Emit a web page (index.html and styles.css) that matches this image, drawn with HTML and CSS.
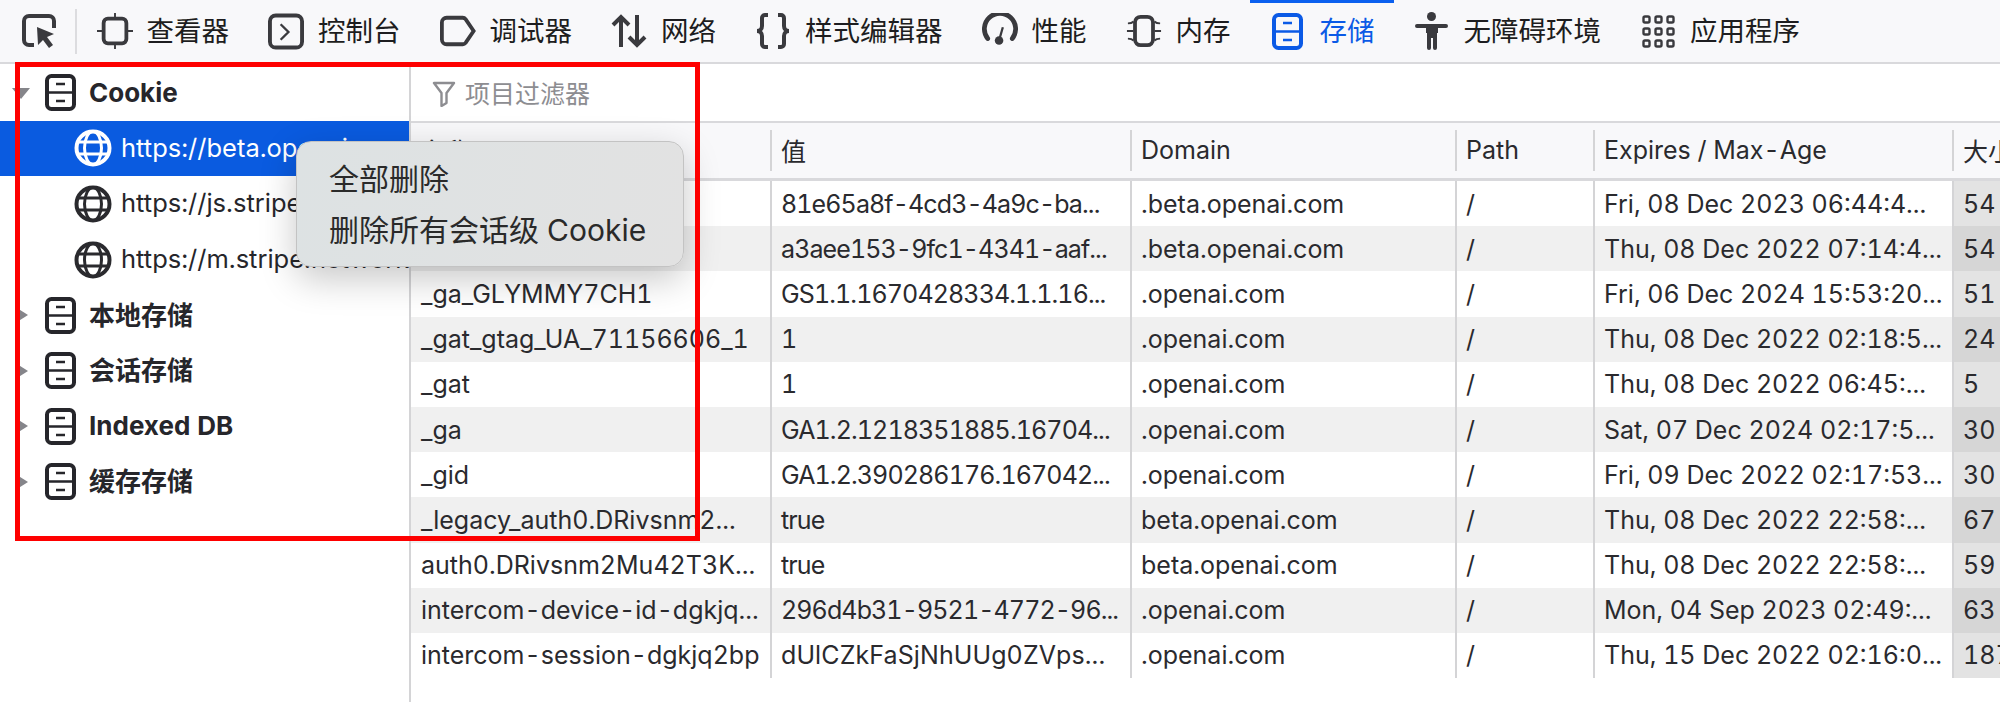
FILE: index.html
```html
<!DOCTYPE html>
<html lang="zh-CN">
<head>
<meta charset="utf-8">
<title>存储</title>
<link rel="stylesheet" href="styles.css">
</head>
<body>
<svg class="defs" width="0" height="0" aria-hidden="true">
  <symbol id="cabinet" viewBox="0 0 31 37">
    <rect x="2" y="2" width="27" height="33" rx="4.5" fill="none" stroke="currentColor" stroke-width="4"/>
    <path d="M3 18.5h25M11 10h9M11 27h9" fill="none" stroke="currentColor" stroke-width="2.6"/>
  </symbol>
  <symbol id="globe" viewBox="0 0 38 38">
    <g fill="none" stroke="currentColor">
      <circle cx="19" cy="19" r="16.5" stroke-width="4"/>
      <ellipse cx="19" cy="19" rx="8.5" ry="16.5" stroke-width="3"/>
      <path d="M4 13h30M4 25h30" stroke-width="3"/>
    </g>
  </symbol>
</svg>
<header class="toolbar">
  <button class="pick" aria-label="pick">
    <svg width="34" height="34" viewBox="0 0 34 34"><path d="M12 31H7a5 5 0 0 1-5-5V7a5 5 0 0 1 5-5h20a5 5 0 0 1 5 5v7" fill="none" stroke="currentColor" stroke-width="4"/><path d="M15 13l17 7-7 3 6 8-4 3-6-8-5 5z" fill="currentColor"/></svg>
  </button>
  <span class="tool-sep"></span>
  <nav class="tabs">
    <a class="tab"><span class="ti"><svg width="38" height="38" viewBox="0 0 38 38"><rect x="7" y="6" width="24" height="26" rx="4.5" fill="none" stroke="currentColor" stroke-width="4"/><path d="M19 0v6M19 32v6M0 19h7M31 19h7" stroke="currentColor" stroke-width="2" fill="none"/></svg></span><span class="tl">查看器</span></a>
    <a class="tab"><span class="ti"><svg width="37" height="37" viewBox="0 0 37 37"><rect x="2" y="2" width="33" height="33" rx="6" fill="none" stroke="currentColor" stroke-width="4"/><path d="M13 11l8 8-8 8" fill="none" stroke="currentColor" stroke-width="2.4"/></svg></span><span class="tl">控制台</span></a>
    <a class="tab"><span class="ti"><svg width="38" height="32" viewBox="0 0 38 32"><path d="M7 2h17a4 4 0 0 1 3 1.500L35.500 16 27 28.500a4 4 0 0 1-3 1.500H7a5 5 0 0 1-5-5V7a5 5 0 0 1 5-5z" fill="none" stroke="currentColor" stroke-width="4"/></svg></span><span class="tl">调试器</span></a>
    <a class="tab"><span class="ti"><svg width="36" height="34" viewBox="0 0 36 34"><path d="M10 33V4M2 11l8-8 8 8M26 1v29M18 23l8 8 8-8" fill="none" stroke="currentColor" stroke-width="4"/></svg></span><span class="tl">网络</span></a>
    <a class="tab"><span class="ti"><svg width="36" height="36" viewBox="0 0 36 36"><path d="M13 2H10a3 3 0 0 0-3 3v8c0 3-2 5-5 5 3 0 5 2 5 5v8a3 3 0 0 0 3 3h3M23 2h3a3 3 0 0 1 3 3v8c0 3 2 5 5 5-3 0-5 2-5 5v8a3 3 0 0 1-3 3h-3" fill="none" stroke="currentColor" stroke-width="4"/></svg></span><span class="tl">样式编辑器</span></a>
    <a class="tab"><span class="ti"><svg width="38" height="36" viewBox="0 0 38 36"><path d="M6 26A16.500 16.500 0 1 1 32 26" fill="none" stroke="currentColor" stroke-width="5" stroke-linecap="round"/><circle cx="18" cy="28" r="4.500" fill="currentColor"/><path d="M18 28l4-14" stroke="currentColor" stroke-width="2.400"/></svg></span><span class="tl">性能</span></a>
    <a class="tab"><span class="ti"><svg width="38" height="34" viewBox="0 0 38 34"><rect x="9.500" y="2" width="19" height="30" rx="6" fill="none" stroke="currentColor" stroke-width="4"/><path d="M8 7c-2 2-4 2-6 2M8 17H1M8 27c-2-2-4-2-6-2M30 7c2 2 4 2 6 2M30 17h7M30 27c2-2 4-2 6-2" fill="none" stroke="currentColor" stroke-width="2"/></svg></span><span class="tl">内存</span></a>
    <a class="tab active"><span class="ti"><svg width="33" height="37"><use href="#cabinet"/></svg></span><span class="tl">存储</span></a>
    <a class="tab"><span class="ti"><svg width="33" height="38" viewBox="0 0 33 38"><circle cx="16.500" cy="4.500" r="4.500" fill="currentColor"/><path d="M2 12h29a1.500 1.500 0 0 1 0 4h-8v5l-1 0v15a2 2 0 0 1-4 0V26h-2v10a2 2 0 0 1-4 0V21l-1 0v-5H2a2 2 0 0 1 0-4z" fill="currentColor"/></svg></span><span class="tl">无障碍环境</span></a>
    <a class="tab"><span class="ti"><svg width="33" height="33" viewBox="0 0 33 33"><g fill="none" stroke="currentColor" stroke-width="2.400"><rect x="1.500" y="1.500" width="6" height="6" rx="1.500"/><rect x="13.500" y="1.500" width="6" height="6" rx="1.500"/><rect x="25.500" y="1.500" width="6" height="6" rx="1.500"/><rect x="1.500" y="13.500" width="6" height="6" rx="1.500"/><rect x="13.500" y="13.500" width="6" height="6" rx="1.500"/><rect x="25.500" y="13.500" width="6" height="6" rx="1.500"/><rect x="1.500" y="25.500" width="6" height="6" rx="1.500"/><rect x="13.500" y="25.500" width="6" height="6" rx="1.500"/><rect x="25.500" y="25.500" width="6" height="6" rx="1.500"/></g></svg></span><span class="tl">应用程序</span></a>
  </nav>
</header>
<main class="panel">
  <aside class="tree">
    <div class="node"><i class="tri down"></i><svg class="cab" width="31" height="37"><use href="#cabinet"/></svg><b>Cookie</b></div>
    <div class="leaf selected"><svg width="38" height="38"><use href="#globe"/></svg><span>https://beta.openai.com</span></div>
    <div class="leaf"><svg width="38" height="38"><use href="#globe"/></svg><span>https://js.stripe.com</span></div>
    <div class="leaf"><svg width="38" height="38"><use href="#globe"/></svg><span>https://m.stripe.network</span></div>
    <div class="node"><i class="tri"></i><svg class="cab" width="31" height="37"><use href="#cabinet"/></svg><b class="cjk">本地存储</b></div>
    <div class="node"><i class="tri"></i><svg class="cab" width="31" height="37"><use href="#cabinet"/></svg><b class="cjk">会话存储</b></div>
    <div class="node"><i class="tri"></i><svg class="cab" width="31" height="37"><use href="#cabinet"/></svg><b>Indexed DB</b></div>
    <div class="node"><i class="tri"></i><svg class="cab" width="31" height="37"><use href="#cabinet"/></svg><b class="cjk">缓存存储</b></div>
  </aside>
  <section class="content">
    <div class="filter">
      <svg width="24" height="26" viewBox="0 0 24 26"><path d="M2 2h20l-7.500 10v10l-5 3V12z" fill="none" stroke="currentColor" stroke-width="2.400" stroke-linejoin="round"/></svg>
      <span>项目过滤器</span>
    </div>
    <div class="grid">
      <div class="row head"><span>名称</span><span>值</span><span>Domain</span><span>Path</span><span>Expires / Max-Age</span><span>大小</span></div>
      <div class="row"><span>__cf_bm</span><span>81e65a8f-4cd3-4a9c-ba...</span><span>.beta.openai.com</span><span>/</span><span>Fri, 08 Dec 2023 06:44:4...</span><span>54</span></div>
      <div class="row"><span>__cfuid</span><span>a3aee153-9fc1-4341-aaf...</span><span>.beta.openai.com</span><span>/</span><span>Thu, 08 Dec 2022 07:14:4...</span><span>54</span></div>
      <div class="row"><span>_ga_GLYMMY7CH1</span><span>GS1.1.1670428334.1.1.16...</span><span>.openai.com</span><span>/</span><span>Fri, 06 Dec 2024 15:53:20...</span><span>51</span></div>
      <div class="row"><span>_gat_gtag_UA_71156606_1</span><span>1</span><span>.openai.com</span><span>/</span><span>Thu, 08 Dec 2022 02:18:5...</span><span>24</span></div>
      <div class="row"><span>_gat</span><span>1</span><span>.openai.com</span><span>/</span><span>Thu, 08 Dec 2022 06:45:...</span><span>5</span></div>
      <div class="row"><span>_ga</span><span>GA1.2.1218351885.16704...</span><span>.openai.com</span><span>/</span><span>Sat, 07 Dec 2024 02:17:5...</span><span>30</span></div>
      <div class="row"><span>_gid</span><span>GA1.2.390286176.167042...</span><span>.openai.com</span><span>/</span><span>Fri, 09 Dec 2022 02:17:53...</span><span>30</span></div>
      <div class="row"><span>_legacy_auth0.DRivsnm2...</span><span>true</span><span>beta.openai.com</span><span>/</span><span>Thu, 08 Dec 2022 22:58:...</span><span>67</span></div>
      <div class="row"><span>auth0.DRivsnm2Mu42T3K...</span><span>true</span><span>beta.openai.com</span><span>/</span><span>Thu, 08 Dec 2022 22:58:...</span><span>59</span></div>
      <div class="row"><span>intercom-device-id-dgkjq...</span><span>296d4b31-9521-4772-96...</span><span>.openai.com</span><span>/</span><span>Mon, 04 Sep 2023 02:49:...</span><span>63</span></div>
      <div class="row"><span>intercom-session-dgkjq2bp</span><span>dUlCZkFaSjNhUUg0ZVps...</span><span>.openai.com</span><span>/</span><span>Thu, 15 Dec 2022 02:16:0...</span><span>187</span></div>
    </div>
  </section>
</main>
<div class="menu">
  <div>全部删除</div>
  <div>删除所有会话级 Cookie</div>
</div>
<div class="annotation"></div>
</body>
</html>
```
FILE: styles.css
```css
* { box-sizing: border-box; }
html, body { margin: 0; height: 702px; overflow: hidden; background: #fff; }
body {
  width: 2000px;
  position: relative;
  font-family: Inter, "Noto Sans CJK SC", sans-serif;
  font-variant-numeric: tabular-nums;
  color: #26262b;
  display: flex;
  flex-direction: column;
}
.defs { position: absolute; }

.toolbar {
  height: 64px;
  flex: none;
  display: flex;
  align-items: center;
  padding-left: 22px;
  background: #f8f8fa;
  border-bottom: 2px solid #d9d9dc;
}
.pick { width: 34px; height: 34px; padding: 0; border: 0; background: none; color: #3a3a3e; display: flex; }
.tool-sep { width: 2px; height: 45px; margin-left: 19px; background: #dcdcdf; }
.tabs { display: flex; height: 100%; }
.tab {
  position: relative;
  display: flex;
  align-items: center;
  gap: 14px;
  padding: 0 19.5px;
  font-size: 27.5px;
  color: #1d1d20;
  white-space: nowrap;
}
.tl { margin-bottom: 4px; }
.ti { width: 36px; display: flex; justify-content: center; color: #3a3a3e; }
.tab.active, .tab.active .ti { color: #0b5ae6; }
.tab.active::before { content: ""; position: absolute; left: 0; right: 0; top: 0; height: 3px; background: #0b60ef; }

.panel { flex: 1; display: flex; min-height: 0; }
.tree { width: 411px; flex: none; border-right: 2px solid #d4d4d6; overflow: hidden; padding-top: 1px; }
.node, .leaf { height: 55.6px; display: flex; align-items: center; white-space: nowrap; }
.node { padding-left: 45px; position: relative; font-size: 26px; color: #26262b; }
.node b { font-weight: 700; margin-left: 13px; margin-bottom: 1px; }
.node b.cjk { margin-bottom: 4px; }
.cab { color: #26262b; flex: none; }
.tri { position: absolute; left: 17px; top: 50%; margin-top: -7px; border-style: solid; border-width: 7px 0 7px 11px; border-color: transparent transparent transparent #85858a; }
.tri.down { left: 12px; margin-top: -5px; border-width: 11px 9px 0 9px; border-color: #85858a transparent transparent transparent; }
.leaf { padding-left: 74px; gap: 9px; font-size: 25.5px; overflow: hidden; }
.leaf span { margin-bottom: 2px; }
.leaf svg { flex: none; color: #2a2a2e; }
.leaf.selected { background: #0a5be0; color: #fff; }
.leaf.selected svg { color: #fff; }

.content { flex: 1; min-width: 0; display: flex; flex-direction: column; }
.filter { height: 59px; flex: none; display: flex; align-items: center; gap: 9px; padding-left: 21px; padding-top: 2px; color: #8d8d91; font-size: 25px; border-bottom: 2px solid #d9d9dc; }
.filter span { margin-bottom: 4px; }
.grid { flex: 1; min-height: 0; }
.row {
  display: grid;
  grid-template-columns: 361px 360px 325px 138px 359px 46px;
  height: 45.2px;
  align-items: stretch;
  font-size: 25px;
  color: #2a2a2e;
}
.row > span { display: flex; align-items: center; padding-left: 9px; white-space: nowrap; overflow: hidden; border-right: 2px solid #d4d4d6; }
.row > span:first-child { padding-left: 10px; }
.row > span:nth-child(2) { letter-spacing: -0.9px; }
.row:last-child > span:nth-child(2) { letter-spacing: 0.1px; }
.row > span:last-child { border-right: 0; background: #e3e3e3; }
.row:nth-child(odd) { background: #f0f0f0; }
.row:nth-child(odd) > span:last-child { background: #d6d6d6; }
.row.head { height: 58px; background: #f8f8fa; border-bottom: 3px solid #d9d9dc; }
.row.head > span { margin: 7px 0; padding-bottom: 2px; }
.row.head > span:last-child { background: none; }

.menu {
  position: absolute;
  left: 296px;
  top: 141px;
  width: 388px;
  height: 126px;
  padding: 12px 32px 0 32px;
  background: linear-gradient(100deg, #dde2e3, #e2e2e2);
  border: 1px solid #c3c3c3;
  border-radius: 15px;
  box-shadow: 0 12px 36px rgba(0,0,0,.22);
  font-size: 30px;
  line-height: 51px;
  color: #2a2a2a;
  white-space: nowrap;
}
.annotation { position: absolute; left: 15px; top: 62px; width: 685px; height: 479px; border: 5px solid #fe0000; pointer-events: none; }
```
